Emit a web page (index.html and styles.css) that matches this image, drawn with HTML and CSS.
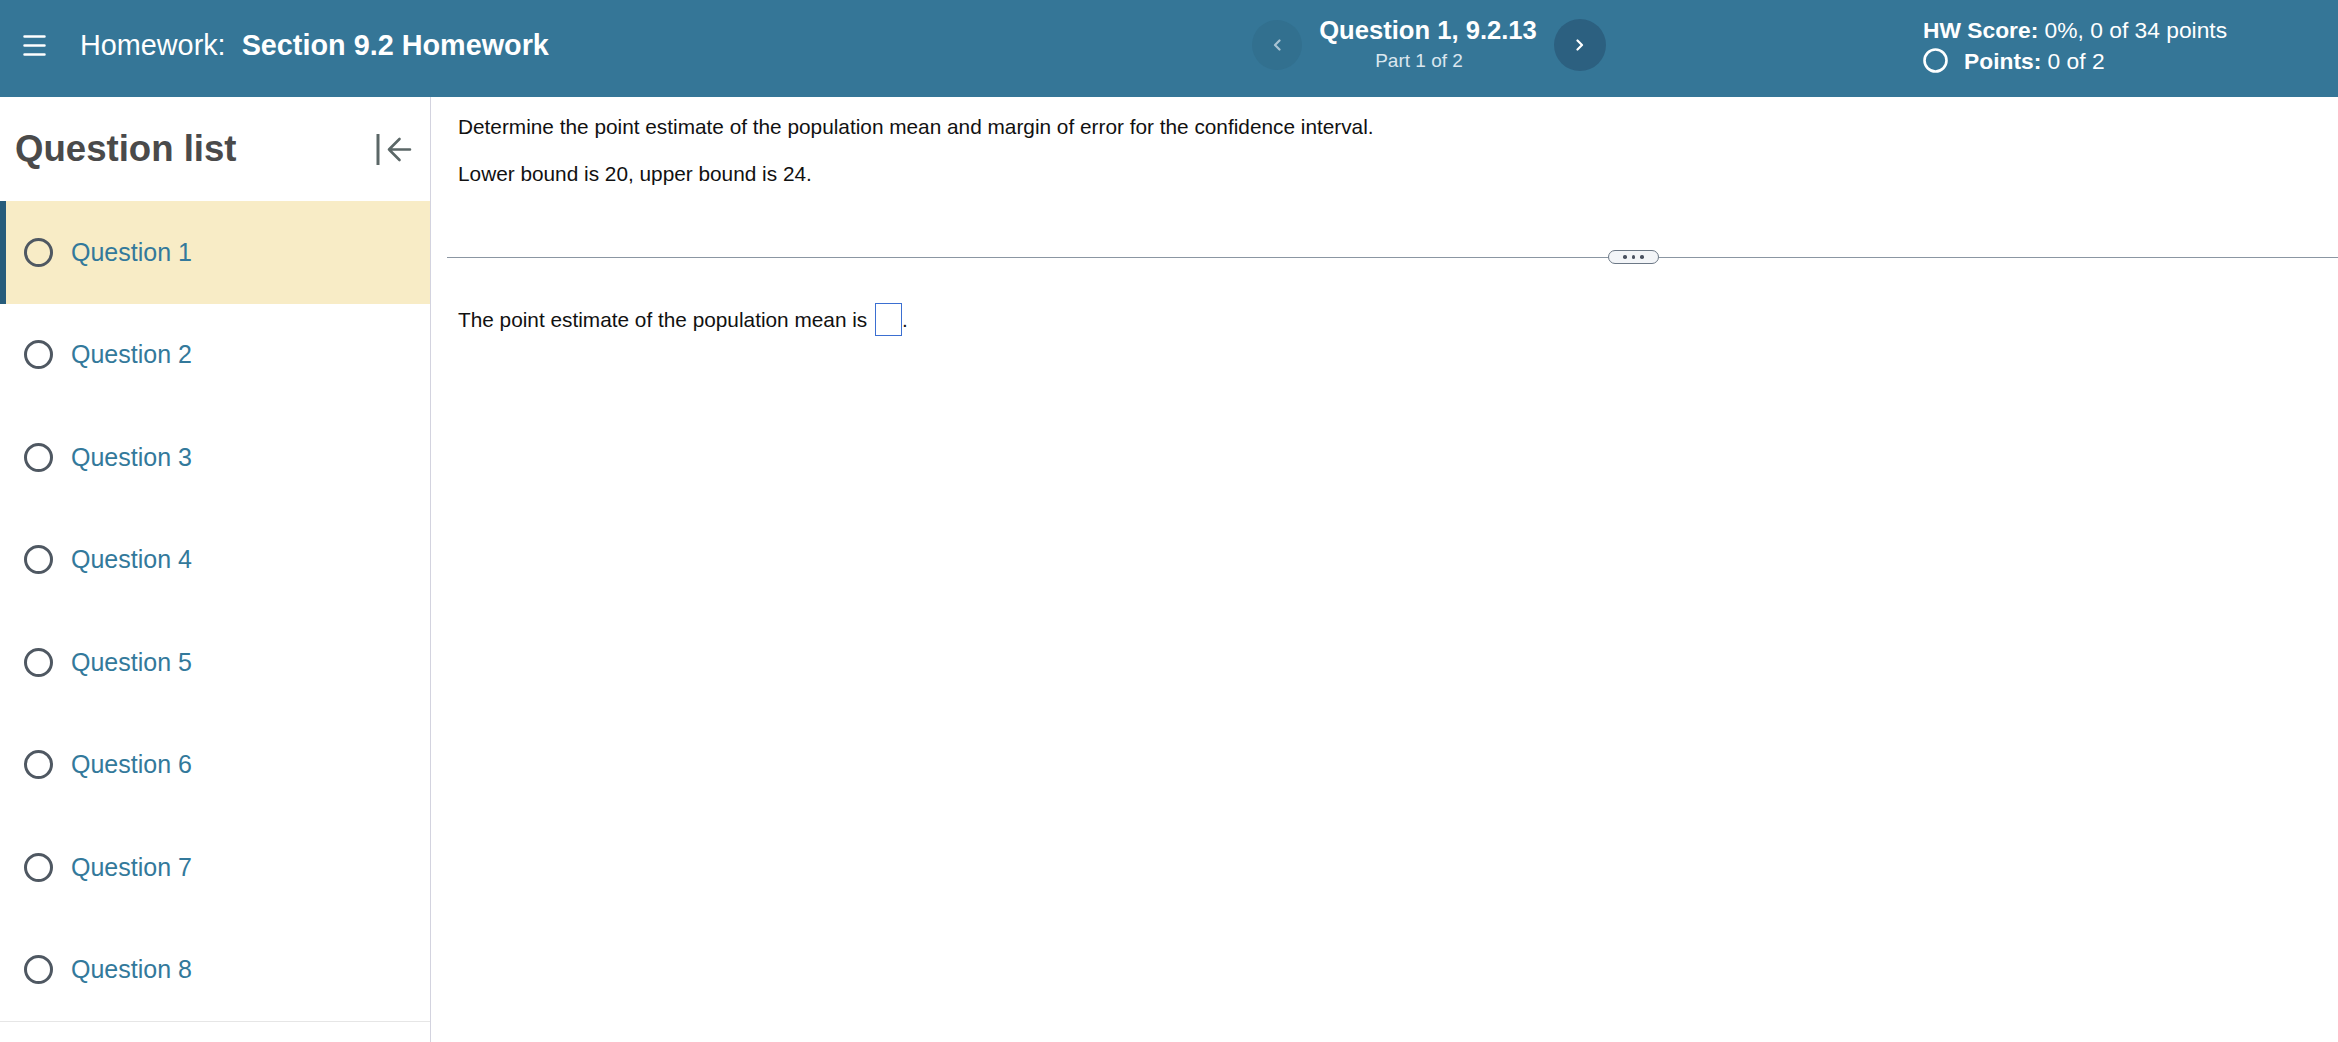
FILE: index.html
```html
<!DOCTYPE html>
<html lang="en">

<head>
    <meta charset="UTF-8">
    <meta name="viewport" content="width=device-width, initial-scale=1.0">
    <title>Section 9.2 Homework</title>
    <link rel="stylesheet" href="styles.css">
</head>

<body>
    <header class="topbar">
        <div class="topbar-left">
            <svg class="menu-icon" width="23" height="21" viewBox="0 0 23 21">
                <path d="M1.5 1.5h20M1.5 10.5h20M1.5 19.5h20" stroke="#fff" stroke-width="2.5" stroke-linecap="round" />
            </svg>
            <span class="hw-label">Homework:</span>
            <strong class="hw-name">Section 9.2 Homework</strong>
        </div>
        <div class="topbar-nav">
            <button type="button" class="nav-btn prev">
                <svg width="8" height="12" viewBox="0 0 8 12">
                    <path d="M6.5 1.5L2 6l4.5 4.5" fill="none" stroke="#a9c3d3" stroke-width="2.2" stroke-linecap="round" stroke-linejoin="round" />
                </svg>
            </button>
            <div class="nav-title">
                <div class="q-title">Question 1, 9.2.13</div>
                <div class="q-part">Part 1 of 2</div>
            </div>
            <button type="button" class="nav-btn next">
                <svg width="8" height="12" viewBox="0 0 8 12">
                    <path d="M1.5 1.5L6 6l-4.5 4.5" fill="none" stroke="#fff" stroke-width="2.2" stroke-linecap="round" stroke-linejoin="round" />
                </svg>
            </button>
        </div>
        <div class="topbar-score">
            <div class="score-line"><b>HW Score:</b> 0%, 0 of 34 points</div>
            <div class="points-line">
                <svg width="25" height="25" viewBox="0 0 25 25">
                    <circle cx="12.5" cy="12.5" r="11" fill="none" stroke="#fff" stroke-width="2.6" />
                </svg>
                <span><b>Points:</b> 0 of 2</span>
            </div>
        </div>
    </header>

    <div class="layout">
        <aside class="sidebar">
            <div class="sidebar-head">
                <h2>Question list</h2>
                <button type="button" class="collapse-btn">
                    <svg width="36" height="33" viewBox="0 0 36 33">
                        <path d="M2 1v31" stroke="#5b6767" stroke-width="3" />
                        <path d="M34 16.5H13M23.5 6L13 16.5 23.5 27" fill="none" stroke="#5b6767" stroke-width="2.6" stroke-linecap="round" stroke-linejoin="round" />
                    </svg>
                </button>
            </div>
            <ul class="qlist">
                <li class="qitem active"><span class="qcircle"></span>Question 1</li>
                <li class="qitem"><span class="qcircle"></span>Question 2</li>
                <li class="qitem"><span class="qcircle"></span>Question 3</li>
                <li class="qitem"><span class="qcircle"></span>Question 4</li>
                <li class="qitem"><span class="qcircle"></span>Question 5</li>
                <li class="qitem"><span class="qcircle"></span>Question 6</li>
                <li class="qitem"><span class="qcircle"></span>Question 7</li>
                <li class="qitem"><span class="qcircle"></span>Question 8</li>
            </ul>
        </aside>

        <main class="content">
            <p class="q-text first">Determine the point estimate of the population mean and margin of error for the confidence interval.</p>
            <p class="q-text">Lower bound is 20, upper bound is 24.</p>

            <div class="divider">
                <div class="divider-line left"></div>
                <button type="button" class="more-pill"><i></i><i></i><i></i></button>
                <div class="divider-line"></div>
            </div>

            <p class="q-text answer">The point estimate of the population mean is <span class="answer-box"></span>.</p>
        </main>
    </div>
</body>

</html>
```

FILE: styles.css
```css
body {
    margin: 0;
    font-family: "Liberation Sans", Arial, sans-serif;
    color: #111;
    background: #fff;
    height: 1042px;
    overflow: hidden;
}

button {
    font-family: inherit;
    border: none;
    padding: 0;
    cursor: pointer;
}

/* top bar */
.topbar {
    display: flex;
    align-items: center;
    height: 97px;
    background-color: #357697;
    color: #fff;
}

.topbar-left {
    display: flex;
    align-items: center;
    box-sizing: border-box;
    width: 1252px;
    padding-left: 23px;
    margin-bottom: 6px;
    font-size: 28.8px;
}

.menu-icon {
    margin-right: 34px;
}

.hw-name {
    margin-left: 16px;
}

.topbar-nav {
    display: flex;
    align-items: center;
    margin-bottom: 8px;
}

.nav-btn {
    display: flex;
    align-items: center;
    justify-content: center;
    width: 50px;
    height: 50px;
    border-radius: 50%;
}

.nav-btn.prev {
    background: #32708f;
}

.nav-btn.next {
    width: 52px;
    height: 52px;
    background: #2c6080;
}

.nav-title {
    width: 218px;
    padding: 0 17px;
    text-align: center;
}

.q-title {
    font-size: 25.6px;
    line-height: 28px;
    font-weight: bold;
    white-space: nowrap;
}

.q-part {
    margin-top: 4px;
    padding-right: 18px;
    font-size: 19px;
    line-height: 26px;
    color: #dbe7ef;
}

.topbar-score {
    margin-left: 317px;
    margin-bottom: 6px;
    font-size: 22.8px;
}

.score-line {
    line-height: 28px;
}

.points-line {
    display: flex;
    align-items: center;
    gap: 16px;
    margin-top: 2px;
    line-height: 30px;
}

/* layout */
.layout {
    display: flex;
    height: 945px;
}

.sidebar {
    flex: 0 0 431px;
    box-sizing: border-box;
    border-right: 1px solid #d3d3df;
}

.sidebar-head {
    display: flex;
    align-items: center;
    justify-content: space-between;
    height: 104px;
    padding: 0 18px 0 15px;
}

.sidebar-head h2 {
    margin: 0;
    font-size: 36.6px;
    color: #4a4a4a;
}

.collapse-btn {
    display: flex;
    background: none;
}

.qlist {
    list-style: none;
    margin: 0;
    padding: 0;
    border-bottom: 1px solid #e6e6e6;
}

.qitem {
    display: flex;
    align-items: center;
    gap: 18px;
    height: 102.5px;
    padding-left: 24px;
    font-size: 25px;
    color: #33799b;
}

.qitem.active {
    background: #f8ecc6;
    box-shadow: inset 6px 0 0 #275c7b;
}

.qcircle {
    width: 23px;
    height: 23px;
    border: 3px solid #4f5862;
    border-radius: 50%;
}

/* question area */
.content {
    flex: 1;
    padding-left: 16px;
}

.q-text {
    margin: 23px 0 0 11px;
    font-size: 20.8px;
    line-height: 24px;
}

.q-text.first {
    margin-top: 18px;
}

.divider {
    display: flex;
    align-items: center;
    margin-top: 64px;
}

.divider-line {
    flex: 1;
    height: 1px;
    background: #8b96a2;
}

.divider-line.left {
    flex: 0 0 1161px;
}

.more-pill {
    display: flex;
    align-items: center;
    justify-content: center;
    gap: 5px;
    box-sizing: border-box;
    width: 51px;
    height: 14px;
    border: 1.5px solid #6c7886;
    border-radius: 8px;
    background: #f3f5f8;
}

.more-pill i {
    width: 3.5px;
    height: 3.5px;
    border-radius: 50%;
    background: #4a5260;
}

.q-text.answer {
    margin-top: 39px;
}

.answer-box {
    display: inline-block;
    box-sizing: border-box;
    width: 27px;
    height: 33px;
    margin-left: 2px;
    border: 1.5px solid #3b6fd1;
    vertical-align: -9px;
}
```
